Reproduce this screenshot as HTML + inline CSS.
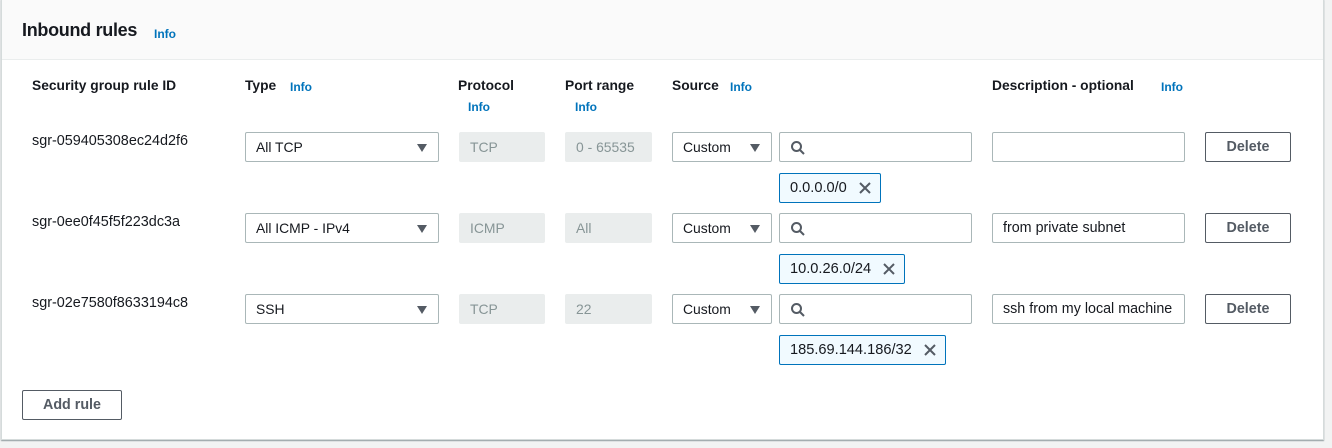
<!DOCTYPE html>
<html><head><style>
*{box-sizing:border-box;margin:0;padding:0}
body{width:1332px;height:448px;background:#f2f3f3;font-family:"Liberation Sans",sans-serif;color:#16191f;position:relative;overflow:hidden}
.panel{position:absolute;left:1px;top:-1px;width:1323px;height:441px;background:#fff;border:1px solid #d5dbdb;box-shadow:0 1px 1px rgba(0,28,36,.4)}
.hdr{position:absolute;left:0;top:0;width:100%;height:60px;background:#fafafa;border-bottom:1px solid #eaeded}
.a{position:absolute;white-space:nowrap}
.h2{font-size:18px;font-weight:bold;letter-spacing:-0.3px}
.info{color:#0073bb;font-size:12px;font-weight:bold}
.th{font-size:13.8px;font-weight:bold}
.td{font-size:14.4px}
.box{position:absolute;height:30px;border:1px solid #aab7b8;border-radius:2px;background:#fff;font-size:13.9px;line-height:28px;padding-left:10px;white-space:nowrap;overflow:hidden}
.dis{background:#eaeded;border-color:#eaeded;color:#879596}
.sel::after{content:"";position:absolute;right:11px;top:11px;border-left:5.5px solid transparent;border-right:5.5px solid transparent;border-top:8px solid #545b64}
.btn{position:absolute;height:30px;border:1px solid #545b64;border-radius:2px;background:#fff;color:#545b64;font-weight:bold;font-size:14.3px;text-align:center;line-height:28px}
.tok{position:absolute;height:30px;border:1px solid #0073bb;background:#f1faff;border-radius:2px;font-size:14.6px;line-height:28px;padding-left:10px;white-space:nowrap}
.tok svg{position:absolute;right:8px;top:7px}
.srch svg{position:absolute;left:10px;top:7px}
</style></head><body>
<div class="panel">
<div class="hdr"></div>
<div class="a h2" style="left:20px;top:20px">Inbound rules</div>
<div class="a info" style="left:152px;top:27px">Info</div>

<div class="a th" style="left:30px;top:78px">Security group rule ID</div>
<div class="a th" style="left:243px;top:78px">Type</div><div class="a info" style="left:288px;top:80px">Info</div>
<div class="a th" style="left:456px;top:78px">Protocol</div><div class="a info" style="left:466px;top:100px">Info</div>
<div class="a th" style="left:563px;top:78px">Port range</div><div class="a info" style="left:573px;top:100px">Info</div>
<div class="a th" style="left:670px;top:78px">Source</div><div class="a info" style="left:728px;top:80px">Info</div>
<div class="a th" style="left:990px;top:78px">Description - optional</div><div class="a info" style="left:1159px;top:80px">Info</div>
</div>

<div class="a td" style="left:32px;top:133px">sgr-059405308ec24d2f6</div>
<div class="box sel" style="left:245px;top:132px;width:194px">All TCP</div>
<div class="box dis" style="left:459px;top:132px;width:86px">TCP</div>
<div class="box dis" style="left:565px;top:132px;width:87px">0 - 65535</div>
<div class="box sel" style="left:672px;top:132px;width:100px">Custom</div>
<div class="box srch" style="left:779px;top:132px;width:193px"><svg width="16" height="16" viewBox="0 0 16 16"><circle cx="6.5" cy="6.5" r="4.5" fill="none" stroke="#545b64" stroke-width="2"/><path d="M10 10l4 4" stroke="#545b64" stroke-width="2"/></svg></div>
<div class="box" style="left:992px;top:132px;width:193px"></div>
<div class="btn" style="left:1205px;top:132px;width:86px">Delete</div>
<div class="tok" style="left:779px;top:173px;width:102px">0.0.0.0/0<svg width="14" height="14" viewBox="0 0 14 14"><path d="M2 2l10 10M12 2L2 12" stroke="#545b64" stroke-width="2"/></svg></div>

<div class="a td" style="left:32px;top:214px">sgr-0ee0f45f5f223dc3a</div>
<div class="box sel" style="left:245px;top:213px;width:194px">All ICMP - IPv4</div>
<div class="box dis" style="left:459px;top:213px;width:86px">ICMP</div>
<div class="box dis" style="left:565px;top:213px;width:87px">All</div>
<div class="box sel" style="left:672px;top:213px;width:100px">Custom</div>
<div class="box srch" style="left:779px;top:213px;width:193px"><svg width="16" height="16" viewBox="0 0 16 16"><circle cx="6.5" cy="6.5" r="4.5" fill="none" stroke="#545b64" stroke-width="2"/><path d="M10 10l4 4" stroke="#545b64" stroke-width="2"/></svg></div>
<div class="box" style="left:992px;top:213px;width:193px;font-size:14.3px">from private subnet</div>
<div class="btn" style="left:1205px;top:213px;width:86px">Delete</div>
<div class="tok" style="left:779px;top:254px;width:126px">10.0.26.0/24<svg width="14" height="14" viewBox="0 0 14 14"><path d="M2 2l10 10M12 2L2 12" stroke="#545b64" stroke-width="2"/></svg></div>

<div class="a td" style="left:32px;top:295px">sgr-02e7580f8633194c8</div>
<div class="box sel" style="left:245px;top:294px;width:194px">SSH</div>
<div class="box dis" style="left:459px;top:294px;width:86px">TCP</div>
<div class="box dis" style="left:565px;top:294px;width:87px">22</div>
<div class="box sel" style="left:672px;top:294px;width:100px">Custom</div>
<div class="box srch" style="left:779px;top:294px;width:193px"><svg width="16" height="16" viewBox="0 0 16 16"><circle cx="6.5" cy="6.5" r="4.5" fill="none" stroke="#545b64" stroke-width="2"/><path d="M10 10l4 4" stroke="#545b64" stroke-width="2"/></svg></div>
<div class="box" style="left:992px;top:294px;width:193px;font-size:14.3px">ssh from my local machine</div>
<div class="btn" style="left:1205px;top:294px;width:86px">Delete</div>
<div class="tok" style="left:779px;top:335px;width:167px">185.69.144.186/32<svg width="14" height="14" viewBox="0 0 14 14"><path d="M2 2l10 10M12 2L2 12" stroke="#545b64" stroke-width="2"/></svg></div>

<div class="btn" style="left:22px;top:390px;width:100px">Add rule</div>
</body></html>
